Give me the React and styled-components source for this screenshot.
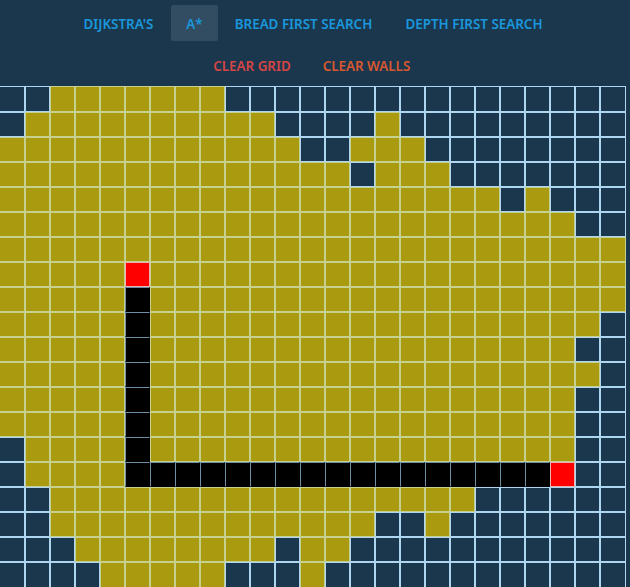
import React from 'react';
import styled, { createGlobalStyle } from 'styled-components';

const GlobalStyle = createGlobalStyle`
    html, body {
        margin: 0;
        padding: 0;
        background: #1b374d;
        overflow: hidden;
    }
`

// [row, first col, last col] runs of visited cells
const VISITED = [
    [0, 2, 8],
    [1, 1, 10], [1, 15, 15],
    [2, 0, 11], [2, 14, 16],
    [3, 0, 13], [3, 15, 17],
    [4, 0, 19], [4, 21, 21],
    [5, 0, 22],
    [6, 0, 24],
    [7, 0, 24],
    [8, 0, 24],
    [9, 0, 23],
    [10, 0, 22],
    [11, 0, 23],
    [12, 0, 22],
    [13, 0, 22],
    [14, 1, 22],
    [15, 1, 4],
    [16, 2, 18],
    [17, 2, 14], [17, 17, 17],
    [18, 3, 10], [18, 12, 13],
    [19, 4, 8], [19, 12, 12],
];

const ROWS = 20;
const COLS = 25;

const cellKind = (row, col) => {
    if ((row === 7 && col === 5) || (row === 15 && col === 22)) return 'end';
    if (col === 5 && row > 7 && row <= 15) return 'path';
    if (row === 15 && col > 5 && col < 22) return 'path';
    if (VISITED.some(([r, from, to]) => r === row && col >= from && col <= to)) return 'visited';
    return 'empty';
};

const App = () => {
    const cells = [];
    for (let row = 0; row < ROWS; row++) {
        for (let col = 0; col < COLS; col++) {
            cells.push(<Cell key={`${row}-${col}`} $kind={cellKind(row, col)} />);
        }
    }

    return (
        <Page>
            <GlobalStyle />
            <Toolbar>
                <NavButton $w={105}>Dijkstra's</NavButton>
                <NavButton $w={47} $active>A*</NavButton>
                <NavButton $w={171}>Bread First Search</NavButton>
                <NavButton $w={170}>Depth First Search</NavButton>
            </Toolbar>
            <Toolbar>
                <ClearButton $w={108} $color="#d64545">Clear Grid</ClearButton>
                <ClearButton $w={121} $color="#d9572f">Clear Walls</ClearButton>
            </Toolbar>
            <Grid>{cells}</Grid>
        </Page>
    );
}

export default App;

const Page = styled.div`
    width: 630px;
    height: 587px;
    overflow: hidden;
    background: #1b374d;
    font-family: "Noto Sans", "Open Sans", sans-serif;
    padding-top: 5px;
    box-sizing: border-box;
`

const Toolbar = styled.div`
    display: flex;
    justify-content: center;
    width: 625px;
    height: 36px;
    margin-bottom: 6px;
`

const NavButton = styled.button`
    border: none;
    border-radius: 2px;
    padding: 2px 0 0;
    width: ${(p) => p.$w}px;
    height: 36px;
    font: inherit;
    font-size: 13.4px;
    font-weight: 600;
    text-transform: uppercase;
    color: #1a97dc;
    background: ${(p) => (p.$active ? '#324c62' : 'transparent')};
`

const ClearButton = styled(NavButton)`
    color: ${(p) => p.$color};
`

const Grid = styled.div`
    display: grid;
    grid-template-columns: repeat(${COLS - 1}, 25px) 26px;
    grid-template-rows: 26px repeat(${ROWS - 2}, 25px) 26px;
    width: 626px;
    margin-top: -3px;
`

const CELL_STYLES = {
    empty: 'background: #1b374d; border-color: #aed6f1;',
    visited: 'background: #a99a10; border-color: #c6d18f;',
    path: 'background: #000; border-color: #6f8fa6 #000 #000 #6f8fa6;',
    end: 'background: #ff0000; border-color: #e8b4b4;',
};

const Cell = styled.div`
    box-sizing: border-box;
    border: 1px solid;
    ${(p) => CELL_STYLES[p.$kind]}
    &:nth-child(${COLS}n + 1) {
        border-left: none;
    }
`
